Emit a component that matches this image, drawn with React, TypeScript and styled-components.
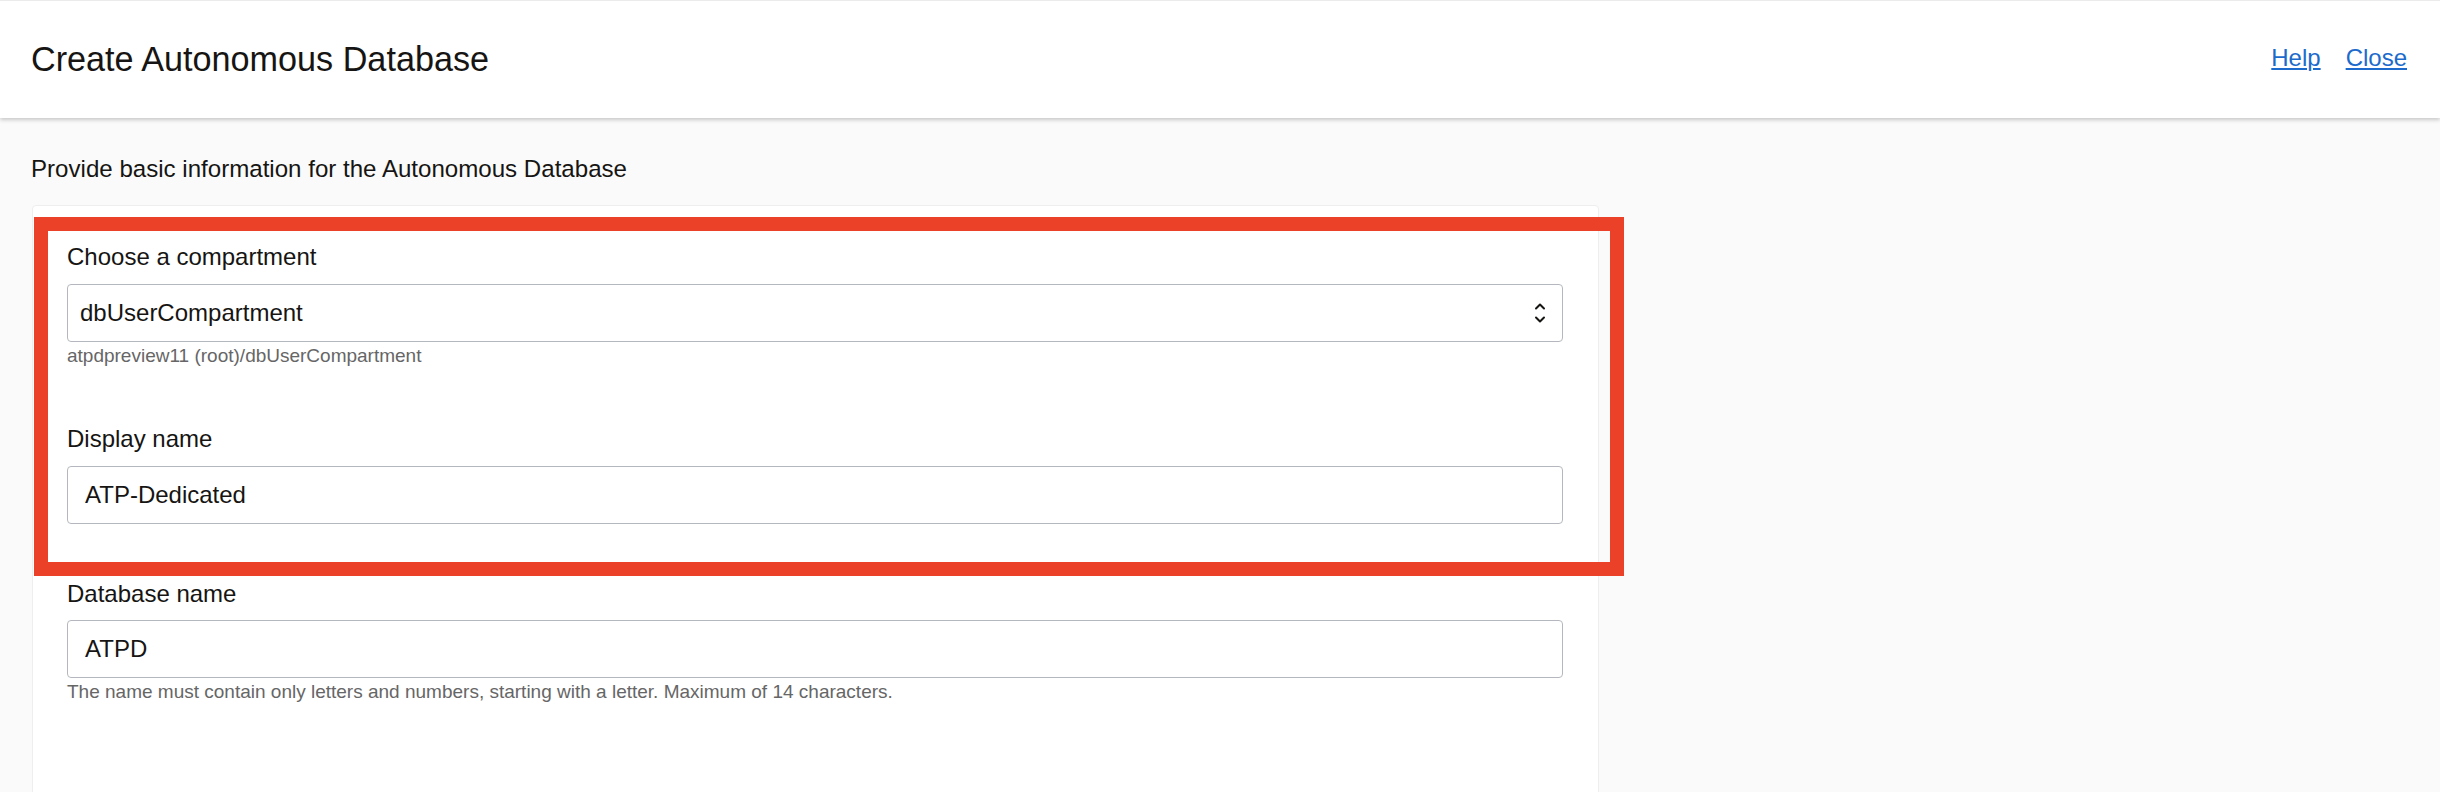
import React from "react";
import styled, { createGlobalStyle } from "styled-components";

const GlobalStyle = createGlobalStyle`
  html, body {
    margin: 0;
    padding: 0;
    overflow: hidden;
    background: #fafafa;
  }
  body {
    font-family: "Liberation Sans", Arial, Helvetica, sans-serif;
    color: #161513;
  }
  * { box-sizing: border-box; }
`;

const Page = styled.div`
  position: relative;
  width: 2440px;
  height: 792px;
  overflow: hidden;
  background: #fafafa;
`;

const Header = styled.header`
  height: 118px;
  display: flex;
  align-items: center;
  justify-content: space-between;
  padding: 0 33px 0 31px;
  background: #ffffff;
  border-top: 1px solid #ebebeb;
  box-shadow: 0 2px 4px rgba(0, 0, 0, 0.2);
  position: relative;
  z-index: 1;
`;

const Title = styled.h1`
  margin: 0;
  font-size: 34.2px;
  font-weight: 400;
  color: #161513;
  line-height: 1.15;
`;

const Links = styled.nav`
  display: flex;
  align-items: center;
  gap: 25px;
  margin-top: -3px;
`;

const Link = styled.a`
  font-size: 24px;
  color: #1c6bcc;
  text-decoration: underline;
  text-underline-offset: 2px;
  cursor: pointer;
`;

const Main = styled.main`
  padding: 37px 0 0 31px;
`;

const Intro = styled.p`
  margin: 0 0 22px 0;
  font-size: 24.1px;
  line-height: 28px;
  color: #161513;
`;

const Card = styled.section`
  width: 1567px;
  min-height: 700px;
  margin-left: 1px;
  background: #ffffff;
  border: 1px solid #eeeeee;
  border-radius: 4px;
  padding: 37px 35px 0 34px;
  display: flex;
  flex-direction: column;
  gap: 56px;
`;

const Field = styled.div`
  display: flex;
  flex-direction: column;
`;

const Label = styled.label`
  font-size: 24px;
  line-height: 28px;
  color: #161513;
  margin-bottom: 12.5px;
`;

const controlBase = `
  height: 58px;
  width: 100%;
  border: 1px solid #b4b8be;
  border-radius: 4px;
  background: #ffffff;
  font-family: "Liberation Sans", Arial, Helvetica, sans-serif;
  font-size: 24px;
  color: #161513;
`;

const SelectBox = styled.div`
  ${controlBase}
  display: flex;
  align-items: center;
  justify-content: space-between;
  padding: 0 16px 0 12px;
`;

const TextInput = styled.input`
  ${controlBase}
  padding: 0 17px;
  outline: none;
  display: block;
`;

const Helper = styled.div`
  margin-top: 1px;
  font-size: 19px;
  line-height: 26.5px;
  color: #666666;
`;

const Highlight = styled.div`
  position: absolute;
  left: 34px;
  top: 217px;
  width: 1590px;
  height: 359px;
  border: 14px solid #ea4128;
  pointer-events: none;
`;

const Chevrons = () => (
  <svg width="12" height="24" viewBox="0 0 12 24" fill="none">
    <path d="M2 7.5 L6 3.5 L10 7.5" stroke="#161513" strokeWidth="2" strokeLinecap="round" strokeLinejoin="round" />
    <path d="M2 16.5 L6 20.5 L10 16.5" stroke="#161513" strokeWidth="2" strokeLinecap="round" strokeLinejoin="round" />
  </svg>
);

export default function App() {
  return (
    <Page>
      <GlobalStyle />
      <Header>
        <Title>Create Autonomous Database</Title>
        <Links>
          <Link>Help</Link>
          <Link>Close</Link>
        </Links>
      </Header>
      <Main>
        <Intro>Provide basic information for the Autonomous Database</Intro>
        <Card>
          <Field>
            <Label>Choose a compartment</Label>
            <SelectBox role="combobox">
              <span>dbUserCompartment</span>
              <Chevrons />
            </SelectBox>
            <Helper>atpdpreview11 (root)/dbUserCompartment</Helper>
          </Field>
          <Field>
            <Label>Display name</Label>
            <TextInput readOnly value="ATP-Dedicated" />
          </Field>
          <Field>
            <Label>Database name</Label>
            <TextInput readOnly value="ATPD" />
            <Helper>The name must contain only letters and numbers, starting with a letter. Maximum of 14 characters.</Helper>
          </Field>
        </Card>
      </Main>
      <Highlight />
    </Page>
  );
}
